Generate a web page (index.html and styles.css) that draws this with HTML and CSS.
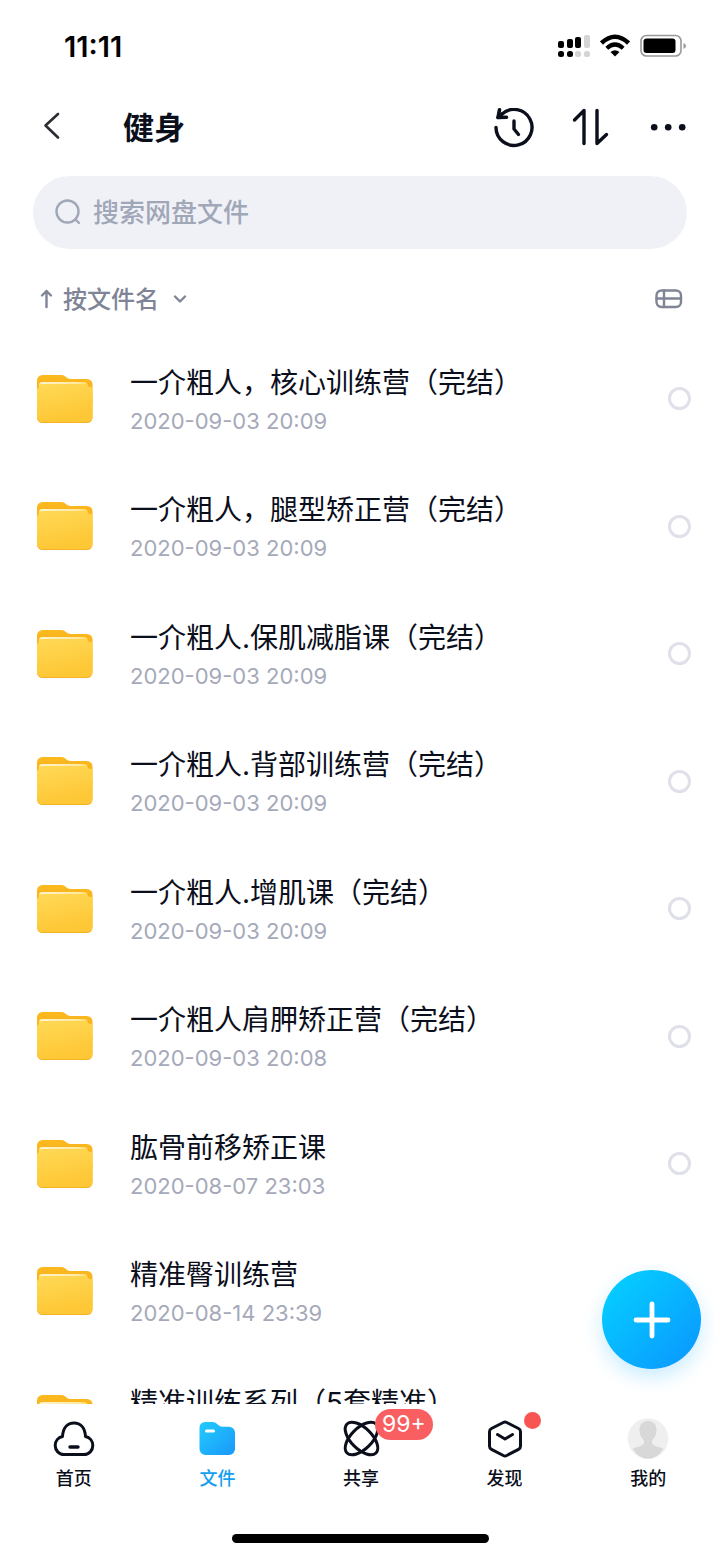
FILE: index.html
```
<!DOCTYPE html>
<html lang="zh-CN">
<head>
  <meta charset="UTF-8">
  <meta name="viewport" content="width=device-width, initial-scale=1.0">
  <title>健身</title>
  <link rel="stylesheet" href="styles.css">
</head>
<body>
  <svg class="defs" width="0" height="0" aria-hidden="true">
    <defs>
      <linearGradient id="folder-back" x1="0" y1="0" x2="0" y2="1">
        <stop offset="0" stop-color="#fbb91f"/>
        <stop offset="1" stop-color="#f8ac1b"/>
      </linearGradient>
      <linearGradient id="folder-front" x1="0" y1="0" x2="0.3" y2="1">
        <stop offset="0" stop-color="#ffda58"/>
        <stop offset="1" stop-color="#fec735"/>
      </linearGradient>
      <linearGradient id="folder-shine" x1="0" y1="0" x2="1" y2="0">
        <stop offset="0" stop-color="#fff3cd"/>
        <stop offset="0.8" stop-color="#ffe9a3"/>
        <stop offset="1" stop-color="#ffda58"/>
      </linearGradient>
      <linearGradient id="files-fill" x1="0" y1="0" x2="1" y2="1">
        <stop offset="0" stop-color="#22ccfc"/>
        <stop offset="1" stop-color="#1a98fb"/>
      </linearGradient>
      <symbol id="folder" viewBox="0 0 56 50">
        <path fill="url(#folder-back)" d="M0 6.500A5.500 5.500 0 0 1 5.500 1H24q2.500 0 4 1.200l2.500 2Q32 5 34 5h16a5.500 5.500 0 0 1 5.500 5.500V28H0z"/>
        <path fill="#f5b324" d="M0 26h55.500v17.500a5.500 5.500 0 0 1-5.500 5.500H5.500A5.500 5.500 0 0 1 0 43.500z"/>
        <path fill="url(#folder-front)" d="M0 15q2-1 2-4 0-3 3-3h42q3 0 3.500 3 .5 2 3 2 2 0 2 3v27a5 5 0 0 1-5 5H5a5 5 0 0 1-5-5z"/>
        <path fill="url(#folder-shine)" d="M2.200 11Q2.500 8 5.500 8H47q2.800 0 3.400 3-1-1-3.400-1H5.500q-2.300 0-3.300 1z"/>
      </symbol>
    </defs>
  </svg>

  <div class="status-bar">
    <span class="time">11:11</span>
    <div class="status-icons">
      <svg width="32" height="24" viewBox="0 0 32 24">
        <rect x="0" y="7" width="6" height="7" rx="2"/>
        <rect x="9" y="5" width="6" height="9" rx="2"/>
        <rect x="17" y="3" width="6" height="11" rx="2"/>
        <rect x="26" y="1" width="6" height="13" rx="2" fill="#d4d4d4"/>
        <rect x="0" y="17" width="6" height="6" rx="2.500"/>
        <rect x="9" y="17" width="6" height="6" rx="2.500"/>
        <rect x="17" y="17" width="6" height="6" rx="2.500" fill="#d4d4d4"/>
        <rect x="26" y="17" width="6" height="6" rx="2.500" fill="#d4d4d4"/>
      </svg>
      <svg width="30" height="24" viewBox="0 0 30 24">
        <path d="M1.500 9Q15-3.500 28.500 9" fill="none" stroke="#000" stroke-width="4.500"/>
        <path d="M6.800 14.200q8.200-7.400 16.400 0" fill="none" stroke="#000" stroke-width="4.200"/>
        <path d="M10.500 18q4.500-3.600 9 0L15 22.500z"/>
      </svg>
      <svg width="46" height="24" viewBox="0 0 46 24">
        <rect x="1" y="1.500" width="40" height="20.500" rx="5.500" fill="none" stroke="#999" stroke-width="1.600"/>
        <rect x="3.500" y="4.500" width="32" height="14.500" rx="3"/>
        <path d="M43.500 9v6q2.500-1 2.500-3t-2.500-3z" fill="#999"/>
      </svg>
    </div>
  </div>

  <header class="header">
    <button class="icon-btn" type="button" aria-label="返回">
      <svg width="40" height="40" viewBox="0 0 40 40">
        <path d="M26 6 13.500 17.500 26 29.500" fill="none" stroke="#2b2d33" stroke-width="2.600" stroke-linecap="round" stroke-linejoin="round"/>
      </svg>
    </button>
    <h1>健身</h1>
    <button class="icon-btn" type="button" aria-label="历史">
      <svg class="line" width="40" height="40" viewBox="0 0 40 40">
        <path d="M2 19.500A18 18 0 1 0 8 6"/>
        <path d="M5.500 1.800 4 9.500l8.500-.3" stroke-width="3.600"/>
        <path d="M4 9.500Q6 8 8 6"/>
        <path d="M20 13v8l4.500 5.500"/>
      </svg>
    </button>
    <button class="icon-btn" type="button" aria-label="传输">
      <svg class="line" width="40" height="40" viewBox="0 0 40 40">
        <path d="M3.500 12l9.500-9.500V35.500"/>
        <path d="M26 2.500V35.500L35.500 26.500"/>
      </svg>
    </button>
    <button class="icon-btn" type="button" aria-label="更多">
      <svg width="40" height="40" viewBox="0 0 40 40" fill="#0b0f1c">
        <circle cx="6.200" cy="19.200" r="3.300"/>
        <circle cx="20.200" cy="19.200" r="3.300"/>
        <circle cx="34.200" cy="19.200" r="3.300"/>
      </svg>
    </button>
  </header>

  <label class="search">
    <svg width="28" height="28" viewBox="0 0 28 28" fill="none" stroke="#a0a7b7" stroke-width="2.400" stroke-linecap="round">
      <circle cx="12.500" cy="12.500" r="11"/>
      <path d="m21 21 3 3"/>
    </svg>
    <input type="search" placeholder="搜索网盘文件" aria-label="搜索网盘文件">
  </label>

  <div class="sort-bar">
    <label class="sort">
      <svg width="14" height="22" viewBox="0 0 14 22">
        <path d="M7.500 19V3M3 7.500 7.500 3l4.500 4.500"/>
      </svg>
      <select aria-label="排序">
        <option>按文件名</option>
      </select>
      <svg class="chevron" width="14" height="22" viewBox="0 0 14 22">
        <path d="m2 8.500 5 5 5-5"/>
      </svg>
    </label>
    <button class="view-btn" type="button" aria-label="切换视图">
      <svg width="28" height="20" viewBox="0 0 28 20">
        <rect x="1.500" y="1.500" width="24.500" height="16.500" rx="5"/>
        <path d="M9 1.500V18M1.500 9.500H26"/>
      </svg>
    </button>
  </div>

  <main class="content">
    <ul class="file-list">
      <li class="file">
        <svg class="folder"><use href="#folder"/></svg>
        <label class="info" for="f1"><span class="name">一介粗人，核心训练营（完结）</span><span class="date">2020-09-03 20:09</span></label>
        <input type="checkbox" id="f1">
      </li>
      <li class="file">
        <svg class="folder"><use href="#folder"/></svg>
        <label class="info" for="f2"><span class="name">一介粗人，腿型矫正营（完结）</span><span class="date">2020-09-03 20:09</span></label>
        <input type="checkbox" id="f2">
      </li>
      <li class="file">
        <svg class="folder"><use href="#folder"/></svg>
        <label class="info" for="f3"><span class="name">一介粗人.保肌减脂课（完结）</span><span class="date">2020-09-03 20:09</span></label>
        <input type="checkbox" id="f3">
      </li>
      <li class="file">
        <svg class="folder"><use href="#folder"/></svg>
        <label class="info" for="f4"><span class="name">一介粗人.背部训练营（完结）</span><span class="date">2020-09-03 20:09</span></label>
        <input type="checkbox" id="f4">
      </li>
      <li class="file">
        <svg class="folder"><use href="#folder"/></svg>
        <label class="info" for="f5"><span class="name">一介粗人.增肌课（完结）</span><span class="date">2020-09-03 20:09</span></label>
        <input type="checkbox" id="f5">
      </li>
      <li class="file">
        <svg class="folder"><use href="#folder"/></svg>
        <label class="info" for="f6"><span class="name">一介粗人肩胛矫正营（完结）</span><span class="date">2020-09-03 20:08</span></label>
        <input type="checkbox" id="f6">
      </li>
      <li class="file">
        <svg class="folder"><use href="#folder"/></svg>
        <label class="info" for="f7"><span class="name">肱骨前移矫正课</span><span class="date">2020-08-07 23:03</span></label>
        <input type="checkbox" id="f7">
      </li>
      <li class="file">
        <svg class="folder"><use href="#folder"/></svg>
        <label class="info" for="f8"><span class="name">精准臀训练营</span><span class="date">2020-08-14 23:39</span></label>
        <input type="checkbox" id="f8">
      </li>
      <li class="file">
        <svg class="folder"><use href="#folder"/></svg>
        <label class="info" for="f9"><span class="name">精准训练系列（5套精准）</span></label>
        <input type="checkbox" id="f9">
      </li>
    </ul>
    <button class="add-btn" type="button" aria-label="新建">
      <svg width="38" height="38" viewBox="0 0 38 38">
        <path d="M19 3v32M3 19h32" stroke="#fff" stroke-width="4.800" stroke-linecap="round"/>
      </svg>
    </button>
  </main>

  <nav class="tab-bar">
    <a class="tab" href="#home">
      <span class="tab-icon">
        <svg class="line" width="44" height="44" viewBox="0 0 44 44">
          <path d="M12 37.500h20c5 0 8.800-4 8.800-9 0-4.500-3-8-7.300-9C33 11 28.500 6 22 6S11 11 10.500 19.500c-4.300 1-7.300 4.500-7.300 9 0 5 3.800 9 8.800 9z" stroke-width="3"/>
          <path d="M18 30h8"/>
        </svg>
      </span>
      首页
    </a>
    <a class="tab active" href="#files">
      <span class="tab-icon">
        <svg width="44" height="44" viewBox="0 0 44 44">
          <path fill="url(#files-fill)" d="M4.500 10.500a5.500 5.500 0 0 1 5.500-5.500h8q2 0 3.500 1.500l2.500 2q1.500 1.200 3.500 1.200H34a6 6 0 0 1 6 6V32a6 6 0 0 1-6 6H10.500a6 6 0 0 1-6-6z"/>
          <path d="M11.500 14h7" stroke="#fff" stroke-width="3" stroke-linecap="round"/>
        </svg>
      </span>
      文件
    </a>
    <a class="tab" href="#share">
      <span class="tab-icon">
        <svg class="line thin" width="44" height="44" viewBox="0 0 44 44">
          <ellipse cx="22.500" cy="21.500" rx="20.500" ry="10.500" transform="rotate(45 22.500 21.500)"/>
          <ellipse cx="22.500" cy="21.500" rx="20.500" ry="10.500" transform="rotate(-45 22.500 21.500)"/>
        </svg>
        <span class="badge">99+</span>
      </span>
      共享
    </a>
    <a class="tab" href="#discover">
      <span class="tab-icon">
        <svg class="line thin" width="44" height="44" viewBox="0 0 44 44">
          <path d="M20.300 5.500 8.500 11.500Q6.500 12.500 6.500 14.800v14.500q0 2 2 3l11.800 6.200q1.700.8 3.400 0l11.800-6.200q2-1 2-3V14.800q0-2.300-2-3.300L23.700 5.500q-1.700-.8-3.400 0z"/>
          <path d="m14.500 17.500 7.500 4.500 7.500-4.500"/>
        </svg>
        <span class="dot"></span>
      </span>
      发现
    </a>
    <a class="tab" href="#me">
      <span class="tab-icon">
        <svg width="44" height="44" viewBox="0 0 44 44">
          <circle cx="22" cy="21.500" r="20.300" fill="#efefef"/>
          <path fill="#d8d8d8" d="M22 4c-5.500 0-8.500 3.700-8.500 9 0 4.500 1.500 7.500 4 9.800 1 2 .5 4.200-1 5.200-3 2-7 2.200-9.800 3.700Q12.500 41.800 22 41.800T37.300 31.700c-2.800-1.500-6.800-1.700-9.800-3.700-1.500-1-2-3.200-1-5.200 2.500-2.300 4-5.300 4-9.800 0-5.300-3-9-8.500-9z"/>
        </svg>
      </span>
      我的
    </a>
  </nav>
  <div class="home-indicator"></div>
</body>
</html>
```
FILE: styles.css
```
* { box-sizing: border-box; }
body {
  font-family: Inter, "Noto Sans CJK SC", sans-serif;
  background-color: #fff;
  color: #0b0f1c;
  margin: 0;
  height: 100vh;
  display: flex;
  flex-direction: column;
}
svg { display: block; flex: none; }
button { border: none; background: none; padding: 0; cursor: pointer; }
.defs { position: absolute; }
.line {
  fill: none;
  stroke: #0b0f1c;
  stroke-width: 3.4px;
  stroke-linecap: round;
  stroke-linejoin: round;
}
.thin { stroke-width: 3px; }

.status-bar {
  display: flex;
  justify-content: space-between;
  align-items: center;
  height: 92px;
  padding: 0 34px 0 64px;
  color: #000;
}
.time { font-size: 29px; font-weight: 600; }
.status-icons { display: flex; gap: 10px; }

.header {
  display: flex;
  align-items: center;
  gap: 37px;
  height: 72px;
  padding: 0 32px;
}
.header h1 {
  flex: 1;
  margin: 0;
  padding-left: 14px;
  font-size: 31px;
  line-height: 40px;
  font-weight: 700;
}

.search {
  display: flex;
  align-items: center;
  gap: 10px;
  height: 73px;
  margin: 12px 33px 0;
  padding: 0 22px;
  border-radius: 37px;
  background-color: #f0f1f7;
}
.search input {
  flex: 1;
  min-width: 0;
  border: none;
  outline: none;
  padding: 0;
  background: none;
  font: inherit;
  font-size: 26px;
  font-weight: 500;
}
.search input::placeholder { color: #a0a7b7; }

.sort-bar {
  display: flex;
  justify-content: space-between;
  align-items: center;
  height: 86px;
  padding: 14px 37px 0 39px;
}
.sort { display: flex; align-items: center; gap: 10px; }
.sort select {
  appearance: none;
  border: none;
  outline: none;
  padding: 0;
  background: none;
  color: #7f8596;
  font: inherit;
  font-size: 24px;
  font-weight: 500;
}
.sort svg, .view-btn svg {
  fill: none;
  stroke: #7f8596;
  stroke-width: 2.4px;
  stroke-linecap: round;
  stroke-linejoin: round;
}
.sort .chevron { margin-left: 4px; }

.content { position: relative; flex: 1; min-height: 0; }
.file-list {
  height: 100%;
  margin: 0;
  padding: 0;
  overflow: hidden;
  list-style: none;
}
.file {
  display: flex;
  align-items: center;
  height: 127px;
  padding: 0 29px 0 37px;
}
.file:nth-child(even) { height: 128px; }
.folder { width: 56px; height: 50px; }
.info { flex: 1; margin-left: 37px; min-height: 76px; }
.name, .date { display: block; white-space: nowrap; }
.name { font-size: 28px; line-height: 44px; }
.date { color: #a5a9b9; font-size: 22px; line-height: 32px; }
.file input {
  appearance: none;
  width: 23px;
  height: 23px;
  margin: 0;
  border: 3px solid #dfe0e9;
  border-radius: 50%;
}
.file input:checked { background-color: #06a7ff; }

.add-btn {
  position: absolute;
  right: 19px;
  bottom: 35px;
  display: grid;
  place-items: center;
  width: 99px;
  height: 99px;
  border-radius: 50%;
  background: linear-gradient(135deg, #05cdff 10%, #0a9bff 90%);
  box-shadow: 0 8px 20px rgba(6, 167, 255, 0.22);
}

.tab-bar {
  display: flex;
  height: 130px;
  padding: 13px 0 0 2px;
  background-color: #fff;
  z-index: 1;
}
.tab {
  flex: 1;
  display: flex;
  flex-direction: column;
  align-items: center;
  color: #0b0f1c;
  font-size: 18px;
  line-height: 36px;
  font-weight: 500;
  text-decoration: none;
}
.tab.active { color: #159ff0; }
.tab-icon { position: relative; }
.badge {
  position: absolute;
  left: 36px;
  top: -8px;
  padding: 0 7px;
  border-radius: 16px;
  background-color: #f95f60;
  color: #fff;
  font-size: 23px;
  line-height: 31px;
  font-weight: 400;
}
.dot {
  position: absolute;
  left: 41px;
  top: -5px;
  width: 17px;
  height: 17px;
  border-radius: 50%;
  background-color: #f85552;
}
.home-indicator {
  align-self: center;
  width: 257px;
  height: 9px;
  margin-bottom: 15px;
  border-radius: 5px;
  background-color: #000;
}
```
